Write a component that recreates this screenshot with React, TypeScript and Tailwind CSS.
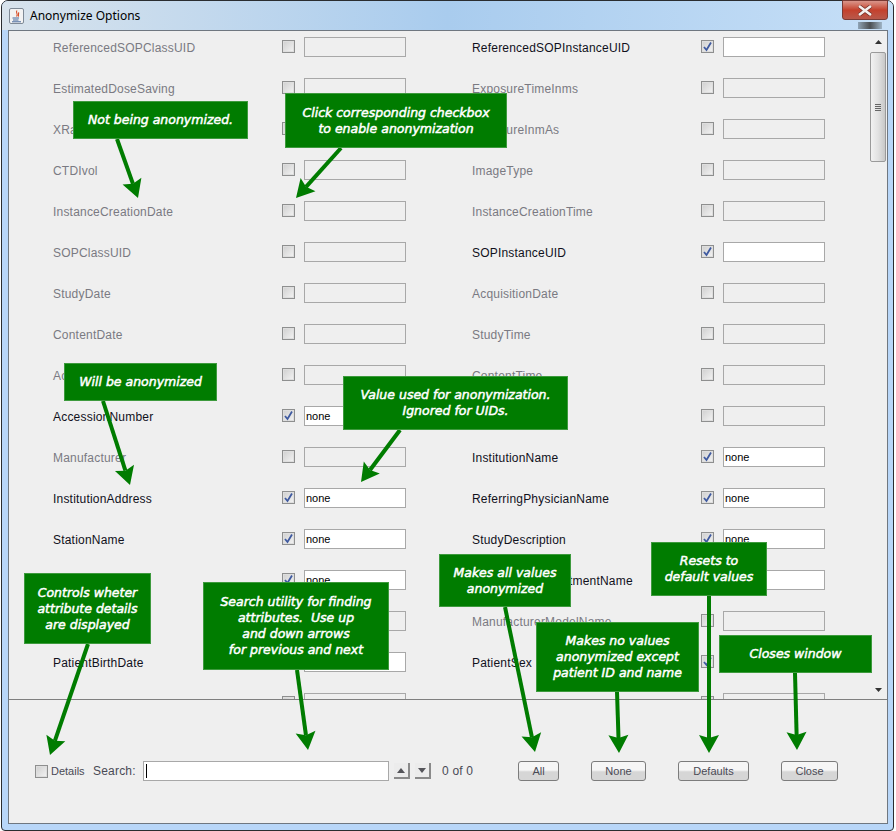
import React from "react";

type Field = { label: string; on?: boolean; enabled?: boolean; value?: string };

// each pair is one row of the attribute grid
const rows: [Field, Field][] = [
  [{ label: "ReferencedSOPClassUID" }, { label: "ReferencedSOPInstanceUID", on: true, enabled: true }],
  [{ label: "EstimatedDoseSaving" }, { label: "ExposureTimeInms" }],
  [{ label: "XRayTubeCurrent" }, { label: "ExposureInmAs" }],
  [{ label: "CTDIvol" }, { label: "ImageType" }],
  [{ label: "InstanceCreationDate" }, { label: "InstanceCreationTime" }],
  [{ label: "SOPClassUID" }, { label: "SOPInstanceUID", on: true, enabled: true }],
  [{ label: "StudyDate" }, { label: "AcquisitionDate" }],
  [{ label: "ContentDate" }, { label: "StudyTime" }],
  [{ label: "AcquisitionTime" }, { label: "ContentTime" }],
  [{ label: "AccessionNumber", on: true, enabled: true, value: "none" }, { label: "Modality" }],
  [{ label: "Manufacturer" }, { label: "InstitutionName", on: true, enabled: true, value: "none" }],
  [{ label: "InstitutionAddress", on: true, enabled: true, value: "none" }, { label: "ReferringPhysicianName", on: true, enabled: true, value: "none" }],
  [{ label: "StationName", on: true, enabled: true, value: "none" }, { label: "StudyDescription", on: true, enabled: true, value: "none" }],
  [{ label: "SeriesDescription", on: true, enabled: true, value: "none" }, { label: "InstitutionalDepartmentName", on: true, enabled: true, value: "none" }],
  [{ label: "PatientName" }, { label: "ManufacturerModelName" }],
  [{ label: "PatientBirthDate", on: true, enabled: true }, { label: "PatientSex", on: true, enabled: true }],
  [{ label: "" }, { label: "" }], // only the top edge of this row shows
];

const callouts = [
  { cls: "left-[73px] top-[101px] w-[175px] h-[38px]", text: ["Not being anonymized."] },
  { cls: "left-[285px] top-[93px] w-[222px] h-[55px]", text: ["Click corresponding checkbox", "to enable anonymization"] },
  { cls: "left-[64px] top-[363px] w-[153px] h-[38px]", text: ["Will be anonymized"] },
  { cls: "left-[343px] top-[376px] w-[225px] h-[54px]", text: ["Value used for anonymization.", "Ignored for UIDs."] },
  { cls: "left-[24px] top-[573px] w-[127px] h-[71px]", text: ["Controls wheter", "attribute details", "are displayed"] },
  { cls: "left-[203px] top-[582px] w-[186px] h-[88px]", text: ["Search utility for finding", "attributes.  Use up", "and down arrows", "for previous and next"] },
  { cls: "left-[439px] top-[554px] w-[132px] h-[53px]", text: ["Makes all values", "anonymized"] },
  { cls: "left-[536px] top-[622px] w-[163px] h-[70px]", text: ["Makes no values", "anonymized except", "patient ID and name"] },
  { cls: "left-[651px] top-[542px] w-[116px] h-[54px]", text: ["Resets to", "default values"] },
  { cls: "left-[719px] top-[635px] w-[153px] h-[38px]", text: ["Closes window"] },
];

// shaft start, then tip of the arrow head
const arrows = [
  [117, 139, 138, 198],
  [341, 148, 296, 198],
  [103, 401, 130, 485],
  [400, 430, 361, 482],
  [88, 644, 50, 755],
  [297, 670, 308, 750],
  [505, 607, 535, 752],
  [617, 692, 619, 753],
  [709, 596, 709, 753],
  [795, 673, 797, 750],
];

function Arrow({ x1, y1, x2, y2 }: { x1: number; y1: number; x2: number; y2: number }) {
  const len = Math.hypot(x2 - x1, y2 - y1);
  const ux = (x2 - x1) / len;
  const uy = (y2 - y1) / len;
  const bx = x2 - ux * 18;
  const by = y2 - uy * 18;
  const nx = x2 - ux * 15;
  const ny = y2 - uy * 15;
  const head = `${x2},${y2} ${bx - uy * 10},${by + ux * 10} ${nx},${ny} ${bx + uy * 10},${by - ux * 10}`;
  return (
    <g>
      <line x1={x1} y1={y1} x2={nx} y2={ny} stroke="#007c00" strokeWidth="4" />
      <polygon points={head} fill="#007c00" />
    </g>
  );
}

function Check({ on }: { on?: boolean }) {
  return (
    <span className="flex w-[13px] h-[13px] shrink-0 items-center justify-center border border-[#8e8f8f] bg-gradient-to-br from-[#cfcfcf] to-[#f4f4f4] outline outline-1 -outline-offset-2 outline-[#dedede]">
      {on && (
        <svg width="11" height="11" viewBox="0 0 11 11" className="relative">
          <path d="M2 6 L4.5 9 L9 1.5" fill="none" stroke="#3f5aa0" strokeWidth="1.8" />
        </svg>
      )}
    </span>
  );
}

function Cell({ f }: { f: Field }) {
  return (
    <div className="flex items-center h-[41px] w-[419px] shrink-0">
      <span className={`w-[229px] pt-[2px] text-[12px] tracking-[0.2px] whitespace-nowrap ${f.enabled ? "text-[#11111c]" : "text-[#7a7a82]"}`}>{f.label}</span>
      <Check on={f.on} />
      <div className={`ml-[9px] w-[102px] h-[20px] border border-[#a8a8a8] px-[1px] text-[11px] leading-[18px] text-black ${f.enabled ? "bg-white" : "bg-[#efefef]"}`}>{f.value}</div>
    </div>
  );
}

function PushButton({ label, cls }: { label: string; cls: string }) {
  return (
    <div className={`flex h-[20px] items-center justify-center rounded-[3px] border border-[#7c7c7c] bg-gradient-to-b from-[#f6f6f6] from-45% to-[#d6d6d6] to-55% text-[11px] text-[#4a4a55] ${cls}`}>
      {label}
    </div>
  );
}

function ArrowButton({ down }: { down?: boolean }) {
  return (
    <div className="flex w-[16px] h-[16px] items-center justify-center border-r-2 border-b-2 border-[#8a8a8a] bg-[#ececec]">
      <svg width="8" height="5" viewBox="0 0 8 5">
        <path d={down ? "M0 0 H8 L4 5 Z" : "M4 0 L8 5 H0 Z"} fill="#55555a" />
      </svg>
    </div>
  );
}

export default function App() {
  return (
    <div className="relative w-[896px] h-[831px] overflow-hidden bg-white pl-[1px] pr-[2px] font-['Liberation_Sans',sans-serif]">
      {/* Window frame */}
      <div className="flex flex-col w-full h-full rounded-t-[7px] rounded-b-[4px] border border-[#2a2d30] bg-[#b8d6f8] pl-[6px] pr-[5px] pb-[6px]">
        {/* Title bar */}
        <div className="flex items-center h-[29px] shrink-0 gap-[6px] -ml-[6px] -mr-[5px] pl-[7px] rounded-t-[6px] bg-gradient-to-r from-[#d8e3ec] via-[#a9ccee] to-[#c6dff7]">
          <svg width="15" height="16" viewBox="0 0 15 16">
            <rect x="0.5" y="0.5" width="14" height="15" rx="1.5" fill="#f3f3f3" stroke="#7f8a96" />
            <path d="M8 2.5 C6 5 10 6 7.5 8.5 M10 4.5 C8.5 6 10.5 7 9 8.5" fill="none" stroke="#d8502a" strokeWidth="1.1" />
            <path d="M3.5 10 H10 M4 12 H9.5 M3 13.8 H12" stroke="#43679a" strokeWidth="1" />
          </svg>
          <span className="font-['Noto_Sans',sans-serif] text-[12px] text-black">Anonymize Options</span>
        </div>

        {/* Client area */}
        <div className="flex flex-col flex-1 min-h-0 border border-[#6f7780] bg-[#efefef]">
          <div className="flex h-[669px] shrink-0 border-b border-[#7f7f7f] overflow-hidden">
            <div className="flex-1 pl-[44px] overflow-hidden">
              <div className="flex flex-col -mt-[5px]">
                {rows.map(([a, b], i) => (
                  <div key={i} className="flex">
                    <Cell f={a} />
                    <Cell f={b} />
                  </div>
                ))}
              </div>
            </div>
            {/* Scrollbar */}
            <div className="flex flex-col items-center w-[18px] shrink-0 pt-[9px] pb-[7px]">
              <svg width="7" height="4" viewBox="0 0 7 4"><path d="M3.5 0 L7 4 H0 Z" fill="#333" /></svg>
              <div className="flex items-center justify-center w-[16px] h-[110px] mt-[8px] rounded-[2px] border border-[#9a9a9a] bg-gradient-to-r from-[#f2f2f2] via-[#e2e2e2] to-[#c8c8c8]">
                <div className="flex flex-col gap-[1px] w-[6px]">
                  <div className="h-px bg-[#666]" />
                  <div className="h-px bg-[#666]" />
                  <div className="h-px bg-[#666]" />
                  <div className="h-px bg-[#666]" />
                </div>
              </div>
              <div className="flex-1" />
              <svg width="7" height="4" viewBox="0 0 7 4"><path d="M0 0 H7 L3.5 4 Z" fill="#333" /></svg>
            </div>
          </div>

          {/* Bottom controls */}
          <div className="flex flex-1 items-start pl-[26px] pt-[61px] text-[12px] text-[#4a4a55]">
            <div className="flex items-center h-[20px]">
              <Check />
              <span className="ml-[3px] w-[33px] text-[11px]">Details</span>
              <span className="ml-[9px] w-[41px] tracking-[0.2px]">Search:</span>
              <div className="ml-[9px] flex items-center w-[246px] h-[20px] border border-[#a8a8a8] bg-white pl-[2px]">
                <div className="w-px h-[14px] bg-black" />
              </div>
              <div className="ml-[5px]"><ArrowButton /></div>
              <div className="ml-[5px]"><ArrowButton down /></div>
              <span className="ml-[11px] w-[76px] tracking-[0.2px]">0 of 0</span>
            </div>
            <PushButton label="All" cls="w-[41px]" />
            <PushButton label="None" cls="ml-[32px] w-[55px]" />
            <PushButton label="Defaults" cls="ml-[32px] w-[71px]" />
            <PushButton label="Close" cls="ml-[32px] w-[57px]" />
          </div>
        </div>
      </div>

      {/* Close button and its glow */}
      <div className="absolute left-[842px] top-0 flex items-center justify-center w-[46px] h-[20px] rounded-b-[3px] border border-[#7a3a34] bg-gradient-to-b from-[#d9958a] via-[#c4402c] to-[#b8584a]">
        <svg width="16" height="11" viewBox="0 0 16 11">
          <path d="M2 1 L14 10 M14 1 L2 10" stroke="#6d2a22" strokeWidth="4" />
          <path d="M2 1 L14 10 M14 1 L2 10" stroke="#f4f0ee" strokeWidth="2.6" />
        </svg>
      </div>
      <div className="absolute left-[858px] top-[22px] w-[24px] h-[7px] bg-gradient-to-r from-[#8fa4b6] via-[#4c5054] to-[#9fb4c6]" />

      {/* Annotations laid over the dialog */}
      <svg className="absolute inset-0" width="896" height="831">
        {arrows.map(([x1, y1, x2, y2]) => (
          <Arrow key={`${x1}-${y1}`} x1={x1} y1={y1} x2={x2} y2={y2} />
        ))}
      </svg>
      {callouts.map((c) => (
        <div
          key={c.text[0]}
          className={`absolute flex flex-col items-center justify-center bg-[#007c00] border border-[#3d9a3d] font-['DejaVu_Sans',sans-serif] text-[12.5px] leading-[16px] font-normal italic text-white [-webkit-text-stroke:0.5px_white] whitespace-pre ${c.cls}`}
        >
          {c.text.map((t) => (
            <span key={t}>{t}</span>
          ))}
        </div>
      ))}
    </div>
  );
}
